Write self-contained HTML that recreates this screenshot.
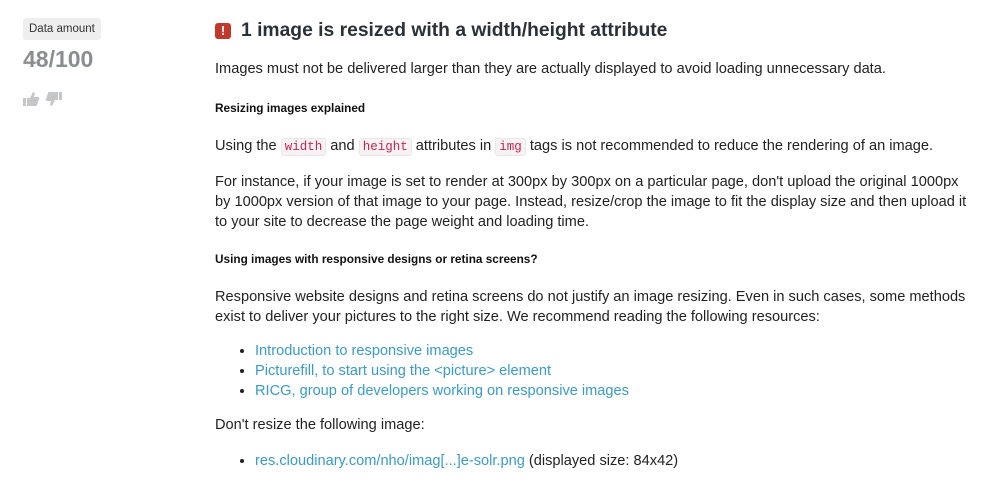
<!DOCTYPE html>
<html><head><meta charset="utf-8"><style>
body{margin:0;width:1002px;height:490px;background:#fff;font-family:"Liberation Sans",sans-serif;color:#222;position:relative;overflow:hidden}
.abs{position:absolute}
.tag{left:23px;top:18px;background:#eeeeee;border-radius:3px;font-size:11.5px;color:#333;padding:4px 6px;line-height:14px}
.score{left:23px;top:46px;font-size:23px;font-weight:bold;color:#8a8e91}
.main{left:215px;top:0;width:780px;font-size:14.6px;line-height:20px}
h1{position:absolute;top:19px;left:0;margin:0;font-size:19.3px;font-weight:bold;color:#2a3138;line-height:24px;white-space:nowrap}
.ex{display:inline-block;width:16px;height:16px;background:#c0392b;border-radius:3px;color:#fff;font-size:13px;text-align:center;line-height:16px;vertical-align:1px;margin-right:10px}
p{position:absolute;left:0;margin:0;white-space:nowrap}
.h{font-size:11.8px;font-weight:bold;color:#111}
code{font-family:"Liberation Mono",monospace;font-size:12.5px;color:#c7254e;background:#f9f2f4;border:1px solid #e8e8e8;border-radius:3px;padding:1px 3px}
a{color:#3a9bc8;text-decoration:none}
ul{position:absolute;left:22px;margin:0;padding-left:18px;white-space:nowrap}
li{line-height:20px}
</style></head><body>
<div class="abs tag">Data amount</div>
<div class="abs score">48/100</div>
<svg class="abs" style="left:23px;top:90px" width="42" height="18" viewBox="0 0 42 18"><g fill="#c4c7ca"><rect x="0" y="8" width="3" height="8"/><path d="M4 8h3l3-6c2 0 2 2 1 5h4c1 0 2 1 1 2l-2 6c0 1-1 1-2 1H4z"/><rect x="36" y="2" width="3" height="8"/><path d="M35 10h-3l-3 6c-2 0-2-2-1-5h-4c-1 0-2-1-1-2l2-6c0-1 1-1 2-1h8z"/></g></svg>
<div class="abs main">
<h1><span class="ex">!</span>1 image is resized with a width/height attribute</h1>
<p style="top:59px">Images must not be delivered larger than they are actually displayed to avoid loading unnecessary data.</p>
<p class="h" style="top:98px">Resizing images explained</p>
<p style="top:136px">Using the <code>width</code> and <code>height</code> attributes in <code>img</code> tags is not recommended to reduce the rendering of an image.</p>
<p style="top:172px">For instance, if your image is set to render at 300px by 300px on a particular page, don't upload the original 1000px<br>by 1000px version of that image to your page. Instead, resize/crop the image to fit the display size and then upload it<br>to your site to decrease the page weight and loading time.</p>
<p class="h" style="top:249px">Using images with responsive designs or retina screens?</p>
<p style="top:287px">Responsive website designs and retina screens do not justify an image resizing. Even in such cases, some methods<br>exist to deliver your pictures to the right size. We recommend reading the following resources:</p>
<ul style="top:341px"><li><a>Introduction to responsive images</a></li><li><a>Picturefill, to start using the &lt;picture&gt; element</a></li><li><a>RICG, group of developers working on responsive images</a></li></ul>
<p style="top:415px">Don't resize the following image:</p>
<ul style="top:451px"><li><a>res.cloudinary.com/nho/imag[...]e-solr.png</a> (displayed size: 84x42)</li></ul>
</div>
</body></html>
